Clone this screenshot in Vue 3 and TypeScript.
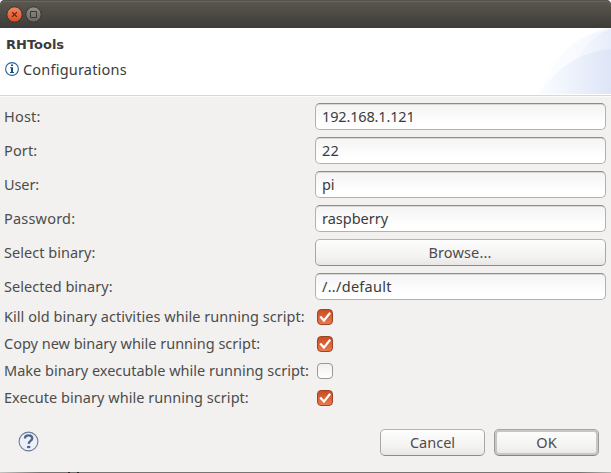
<script setup lang="ts">
import { ref } from 'vue'

interface Field {
  label: string
  kind: 'text' | 'button'
  value: string
  tone: string
}

interface Option {
  label: string
  checked: boolean
  tone: string
}

const fields = ref<Field[]>([
  { label: 'Host:', kind: 'text', value: '192.168.1.121', tone: 'host' },
  { label: 'Port:', kind: 'text', value: '22', tone: 'port' },
  { label: 'User:', kind: 'text', value: 'pi', tone: 'user' },
  { label: 'Password:', kind: 'text', value: 'raspberry', tone: 'password' },
  { label: 'Select binary:', kind: 'button', value: 'Browse...', tone: 'select' },
  { label: 'Selected binary:', kind: 'text', value: '/../default', tone: 'selected' },
])

const options = ref<Option[]>([
  { label: 'Kill old binary activities while running script:', checked: true, tone: 'kill' },
  { label: 'Copy new binary while running script:', checked: true, tone: 'copy' },
  { label: 'Make binary executable while running script:', checked: false, tone: 'make' },
  { label: 'Execute binary while running script:', checked: true, tone: 'execute' },
])
</script>

<template>
  <div class="window">
    <div class="titlebar">
      <svg class="winbtn" width="17" height="17" viewBox="0 0 17 17">
        <defs>
          <linearGradient id="close" x1="0" y1="0" x2="0" y2="1">
            <stop offset="0" stop-color="#f58663" />
            <stop offset="1" stop-color="#df4b1b" />
          </linearGradient>
        </defs>
        <circle cx="8.5" cy="8.5" r="7.7" fill="url(#close)" stroke="#34332e" />
        <path d="M6.1 6.1l4.8 4.8M10.9 6.1l-4.8 4.8" stroke="#5b2818" stroke-width="1.3" />
      </svg>
      <svg class="winbtn" width="17" height="17" viewBox="0 0 17 17">
        <defs>
          <linearGradient id="max" x1="0" y1="0" x2="0" y2="1">
            <stop offset="0" stop-color="#92918a" />
            <stop offset="1" stop-color="#66645d" />
          </linearGradient>
        </defs>
        <circle cx="8.5" cy="8.5" r="7.7" fill="url(#max)" stroke="#34332e" />
        <path d="M5.5 5.5h6v6h-6z" fill="none" stroke="#3a3934" />
      </svg>
    </div>

    <header class="banner">
      <div class="heading">
        <h1><span>RHTools</span></h1>
        <p>
          <svg width="14" height="14" viewBox="0 0 14 14">
            <circle cx="7" cy="7" r="6.4" fill="#fff" stroke="#2b6294" stroke-width="1.1" />
            <path d="M6 2.5h2v1.6H6zM5 5.3h3v4.6h1v1H5v-1h1V6.3H5z" fill="#0d5188" />
          </svg>
          <span>Configurations</span>
        </p>
      </div>
      <svg class="swoosh" width="75" height="66" viewBox="0 0 75 66">
        <defs>
          <linearGradient id="back" x1="0" y1="0" x2="1" y2="0">
            <stop offset="0" stop-color="#ffffff" />
            <stop offset="1" stop-color="#f1f5fd" />
          </linearGradient>
          <linearGradient id="side" x1="0" y1="0" x2="1" y2="0">
            <stop offset="0" stop-color="#f7f9fe" />
            <stop offset="1" stop-color="#e7edfa" />
          </linearGradient>
          <linearGradient id="front" x1="0" y1="0" x2="1" y2="0">
            <stop offset="0" stop-color="#fbfdff" />
            <stop offset="1" stop-color="#dee5f7" />
          </linearGradient>
        </defs>
        <path d="M2 66C13 32 40 6 75 0v66z" fill="url(#back)" />
        <path d="M38 38C45 20 58 6 75 1v65H38z" fill="url(#side)" />
        <path d="M2 66C20 40 44 24 75 21v45z" fill="url(#front)" />
      </svg>
    </header>

    <main class="form">
      <div class="fields">
        <div v-for="field in fields" :key="field.label" class="row">
          <label :class="field.tone"><span>{{ field.label }}</span></label>
          <div v-if="field.kind === 'text'" class="entry" :class="field.tone"><span>{{ field.value }}</span></div>
          <button v-else class="button browse"><span>{{ field.value }}</span></button>
        </div>
      </div>
      <div v-for="option in options" :key="option.label" class="row option">
        <label :class="option.tone"><span>{{ option.label }}</span></label>
        <button class="check" :class="{ on: option.checked }" @click="option.checked = !option.checked">
          <svg v-if="option.checked" width="16" height="16" viewBox="0 0 16 16">
            <path d="M3.2 7.5l3.7 4.1 6.3-7.8" fill="none" stroke="#fff" stroke-width="2.2" />
          </svg>
        </button>
      </div>
    </main>

    <footer class="actions">
      <svg class="help" width="21" height="21" viewBox="0 0 21 21">
        <circle cx="10.5" cy="10.5" r="9.4" fill="#edf0f4" stroke="#6a7c9c" stroke-width="1.1" />
        <path d="M6.9 7.6C6.9 5.2 8.2 4.3 10.5 4.3c2.3 0 3.7 1.1 3.7 2.9 0 2.8-3.3 2.6-3.5 5.6" fill="none" stroke="#50658c" stroke-width="2.3" />
        <ellipse cx="10.7" cy="16" rx="1.8" ry="1.3" fill="#50658c" />
      </svg>
      <button class="button cancel"><span>Cancel</span></button>
      <button class="button ok"><span>OK</span></button>
    </footer>
    <div class="edge"></div>
  </div>
</template>

<style>
body {
  margin: 0;
  background: #f2f1f0;
}
</style>

<style scoped>
.window {
  display: flex;
  flex-direction: column;
  box-sizing: border-box;
  width: 611px;
  height: 473px;
  overflow: hidden;
  background: #f2f1f0;
  color: #4c4c4c;
  font: 14.5px/20px 'Noto Sans', sans-serif;
  white-space: nowrap;
}
.titlebar {
  display: flex;
  gap: 2px;
  box-sizing: border-box;
  height: 28px;
  padding: 6px 0 0 6px;
  border-radius: 5px 5px 0 0;
  background: linear-gradient(#5b584f, #3d3c37);
  box-shadow: inset 0 1px #55534d, inset 0 2px #68665d;
}
.banner {
  display: flex;
  justify-content: space-between;
  box-sizing: border-box;
  height: 68px;
  border-bottom: 1px solid #d9d8d7;
  background: #fff;
}
.heading {
  padding: 7px 0 0 6px;
  color: #3c3c3c;
}
h1 {
  margin: 0;
  font: bold 13px/19px 'DejaVu Sans', sans-serif;
}
.heading p {
  display: flex;
  align-items: flex-start;
  gap: 4px;
  margin: 5px 0 0 -1px;
  letter-spacing: 0.2px;
}
.heading p svg {
  margin-top: 3px;
}
.form {
  display: flex;
  flex-direction: column;
  flex: 1;
  padding: 6px 5px 0 4px;
  border-top: 1px solid #fbfbfb;
}
.fields {
  display: grid;
  gap: 7px;
  margin-bottom: 3px;
}
.row {
  display: grid;
  grid-template-columns: 311px 1fr;
  align-items: center;
  height: 27px;
}
.row label {
  padding-bottom: 2px;
}
.host,
.password {
  letter-spacing: 0.2px;
}
.entry.host {
  letter-spacing: -0.15px;
}
.entry.password {
  letter-spacing: 0;
}
.port {
  letter-spacing: 0.15px;
}
.user {
  letter-spacing: -0.1px;
}
.select,
.selected {
  letter-spacing: 0.03px;
}
.entry.selected {
  letter-spacing: 0.28px;
}
.kill,
.execute {
  letter-spacing: 0.04px;
}
.copy {
  letter-spacing: -0.01px;
}
.entry,
.button {
  box-sizing: border-box;
  height: 27px;
  border: 1px solid #b3b1af;
  border-radius: 5px;
  color: #3c3c3c;
  font: inherit;
}
.entry {
  padding: 2px 6px;
  border-top-color: #8b8b89;
  background: linear-gradient(#f4f4f4, #fff 80%);
  box-shadow: inset 0 1px #d9d9d8;
}
.button {
  padding: 0 0 2px;
  border-color: #b6b4b1 #a9a7a5 #8d8b89;
  background: linear-gradient(#fdfdfd, #f3f3f2 65%, #e8e7e6);
  color: #4c4c4c;
  text-align: center;
}
.button.browse {
  padding-right: 1px;
  letter-spacing: 0.15px;
}
.check {
  box-sizing: border-box;
  width: 16px;
  height: 16px;
  margin-left: 2px;
  padding: 0;
  border: 1px solid #9a9896;
  border-radius: 4px;
  background: linear-gradient(#f0f0f0, #fff);
}
.check.on {
  border-color: #9d4426;
  background: linear-gradient(#c94d20, #e97950);
}
.check svg {
  display: block;
  margin: -1px;
}
.actions {
  display: flex;
  gap: 9px;
  height: 42px;
  padding: 0 12px 0 18px;
}
.help {
  margin: 2px auto 0 0;
}
.cancel {
  width: 105px;
}
.ok {
  width: 105px;
  border-color: #a9a7a5 #9b9a98 #858482;
  box-shadow: inset 0 0 0 2px #c7c6c5;
}
.edge {
  height: 1px;
  margin-top: 1px;
  background:
    linear-gradient(#2b2420, #2b2420) 68px 0 / 2px 1px no-repeat,
    linear-gradient(#1d2627, #1d2627) 77px 0 / 2px 1px no-repeat,
    linear-gradient(90deg, #c4c3c2, #777573 40px, #777573 580px, #b4b3b2);
}
</style>
